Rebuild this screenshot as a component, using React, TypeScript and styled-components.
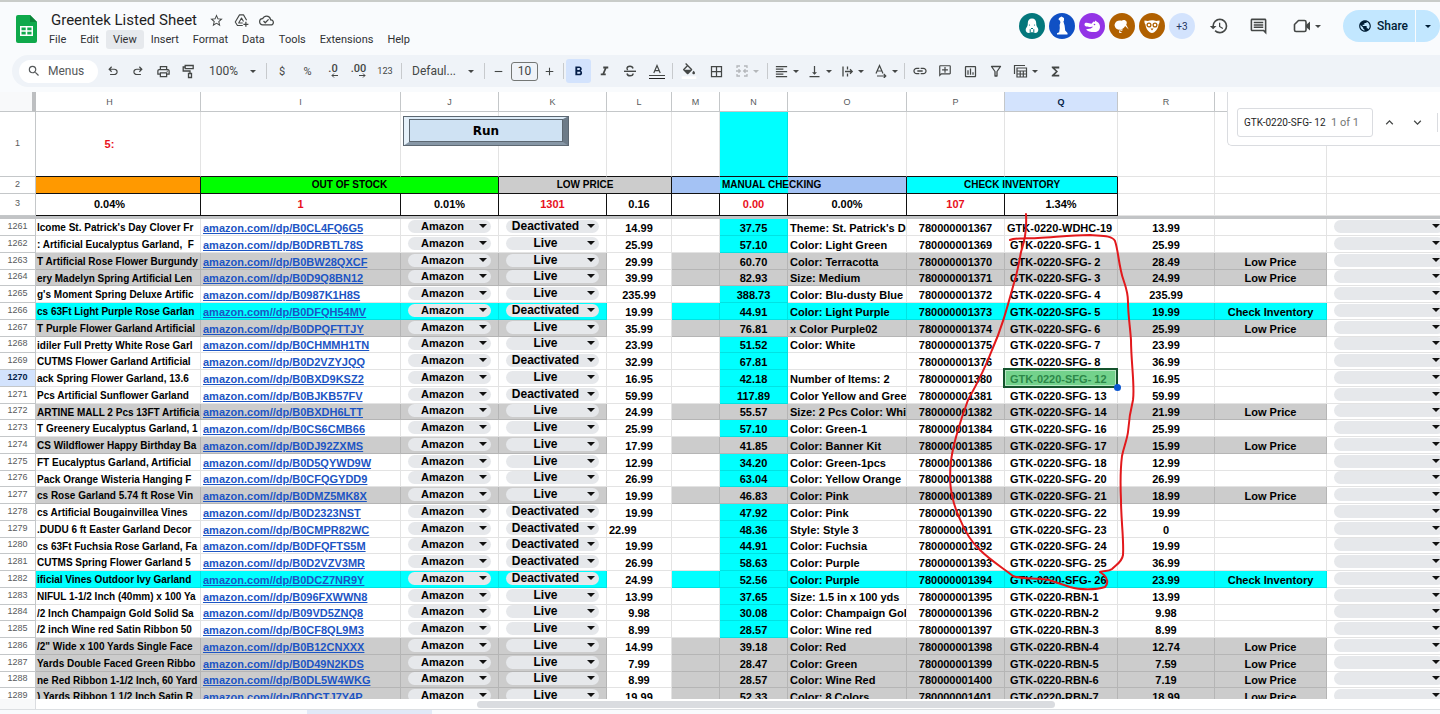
import React from "react";
import styled, { createGlobalStyle, css } from "styled-components";
import {
  MdStarBorder,
  MdOutlineCloudDone,
  MdSearch,
  MdOutlinePrint,
  MdFormatBold,
  MdFormatItalic,
  MdBorderAll,
  MdFormatAlignLeft,
  MdVerticalAlignBottom,
  MdLink,
  MdOutlineAddComment,
  MdOutlinePoll,
  MdFunctions,
  MdHistory,
  MdOutlineInsertComment,
  MdPublic,
  MdExpandLess,
  MdExpandMore,
  MdRemove,
  MdAdd,
} from "react-icons/md";

const GlobalStyle = createGlobalStyle`
  *, *::before, *::after { box-sizing: border-box; }
  body { margin: 0; font-family: Roboto, "Liberation Sans", sans-serif; color: #1f1f1f; background: #f9fbfd; }
  button, input, select { font: inherit; color: inherit; margin: 0; }
`;

const Page = styled.div`
  display: flex;
  flex-direction: column;
  height: 100vh;
  overflow: hidden;
  border-top: 2px solid #c9ccc9;
`;

/* ---------- title bar ---------- */

const TitleBar = styled.header`
  display: flex;
  align-items: flex-start;
  flex: none;
  height: 53px;
  padding-left: 16px;
`;

const Logo = styled.svg`
  flex: none;
  width: 21px;
  height: 28px;
  margin-top: 13px;
`;

const TitleBlock = styled.div`
  flex: 1;
  padding: 8px 0 0 5px;
`;

const TitleRow = styled.div`
  display: flex;
  align-items: center;
  gap: 10px;
  height: 20px;
  padding-left: 9px;
`;

const Title = styled.h1`
  margin: 0 2px 0 0;
  font-size: 15px;
  line-height: 20px;
  font-weight: 400;
`;

const BareButton = styled.button`
  display: inline-flex;
  align-items: center;
  justify-content: center;
  padding: 0;
  border: 0;
  background: none;
  color: #444746;
`;

const MenuRow = styled.nav`
  display: flex;
`;

const MenuItem = styled.button<{ $active?: boolean }>`
  height: 19px;
  padding: 0 7px;
  border: 0;
  border-radius: 3px;
  background: ${(p) => (p.$active ? "#e6e9ed" : "transparent")};
  color: #303134;
  font-size: 11px;
  line-height: 19px;
`;

const People = styled.div`
  display: flex;
  gap: 4px;
  margin: 11px 14px 0 0;
`;

const Avatar = styled.svg`
  width: 26px;
  height: 26px;
`;

const MorePeople = styled.button`
  width: 26px;
  height: 26px;
  padding: 0;
  border: 0;
  border-radius: 50%;
  background: #d3e3fd;
  color: #1f3760;
  font-size: 10px;
`;

const HeaderActions = styled.div`
  display: flex;
  align-items: center;
  gap: 20px;
  height: 26px;
  margin: 11px 18px 0 0;
`;

const Share = styled.div`
  display: flex;
  gap: 1px;
  height: 32px;
  margin-top: 8px;
`;

const ShareButton = styled.button<{ $side: "left" | "right" }>`
  display: flex;
  align-items: center;
  justify-content: center;
  gap: 5px;
  width: ${(p) => (p.$side === "left" ? 72 : 24)}px;
  padding: 0 0 0 ${(p) => (p.$side === "left" ? 8 : 0)}px;
  border: 0;
  border-radius: ${(p) => (p.$side === "left" ? "16px 0 0 16px" : "0 16px 16px 0")};
  background: #c2e7ff;
  color: #001d35;
  font-size: 12px;
  font-weight: 500;
`;

/* ---------- toolbar ---------- */

const ToolbarRow = styled.div`
  display: flex;
  align-items: center;
  flex: none;
  height: 32px;
  margin: 0 0 5px 12px;
  padding-left: 7px;
  border-radius: 16px 0 0 16px;
  background: #eff3f8;
  color: #444746;
`;

const MenuSearch = styled.button`
  display: flex;
  align-items: center;
  gap: 7px;
  width: 79px;
  height: 23px;
  margin-right: 2px;
  padding: 0 0 0 8px;
  border: 0;
  border-radius: 12px;
  background: #fff;
  color: #55585a;
  font-size: 12px;
`;

const Tool = styled.button<{ $w: number; $on?: boolean; $dim?: boolean }>`
  display: inline-flex;
  align-items: center;
  justify-content: center;
  flex: none;
  gap: 4px;
  width: ${(p) => p.$w}px;
  height: 24px;
  padding: 0;
  border: 0;
  border-radius: 3px;
  background: ${(p) => (p.$on ? "#d3e3fd" : "transparent")};
  color: ${(p) => (p.$dim ? "#b4b7ba" : p.$on ? "#041e49" : "#444746")};
  font-size: 11px;
`;

const WideTool = styled(Tool)`
  justify-content: space-between;
  padding: 0 8px;
  font-size: 12px;
`;

const Divider = styled.span`
  flex: none;
  width: 1px;
  height: 16px;
  margin: 0 2px;
  background: #c7cacd;
`;

const SizeInput = styled.input`
  width: 27px;
  height: 19px;
  margin-left: 1px;
  padding: 0;
  border: 1px solid #747775;
  border-radius: 3px;
  background: transparent;
  color: #444746;
  font-size: 12px;
  text-align: center;
`;

/* ---------- sheet ---------- */

const Sheet = styled.main`
  position: relative;
  flex: 1;
  min-height: 0;
  overflow: hidden;
  background: #fff;
  font-family: "Liberation Sans", Arial, sans-serif;
`;

const Grid = styled.table`
  width: calc(100% + 12px);
  table-layout: fixed;
  border-collapse: separate;
  border-spacing: 0;
  color: #000;
  font-size: 11px;
  line-height: 14px;
  font-weight: 700;
`;

/* Column H is scrolled partly under the row numbers, so its centre sits further left. */
const hiddenPart = css`
  padding-right: 17px;
`;

const LetterCell = styled.th<{ $active?: boolean; $corner?: boolean; $cut?: boolean }>`
  height: 20px;
  padding: 0;
  border-right: 1px solid #c4c7c9;
  border-bottom: 1px solid #c4c7c9;
  background: ${(p) => (p.$active ? "#d3e3fd" : "#fff")};
  color: ${(p) => (p.$active ? "#041e49" : "#575a5c")};
  font-size: 9px;
  font-weight: ${(p) => (p.$active ? 700 : 400)};
  ${(p) => p.$cut && hiddenPart}
  ${(p) =>
    p.$corner &&
    css`
      border-right: 4px solid #bdbfc1;
      background: #f8f9fa;
    `}
`;

const NumberCell = styled.th<{ $active?: boolean }>`
  padding: 0 0 3px;
  border-right: 1px solid #c4c7c9;
  border-bottom: 1px solid #c4c7c9;
  background: ${(p) => (p.$active ? "#d3e3fd" : "#fff")};
  color: ${(p) => (p.$active ? "#041e49" : "#575a5c")};
  font-size: 9px;
  line-height: 10px;
  font-weight: ${(p) => (p.$active ? 700 : 400)};
`;

const Cell = styled.td<{ $bg?: string; $left?: boolean; $red?: boolean; $pad?: number }>`
  padding: 2px 0 0 ${(p) => p.$pad ?? 0}px;
  border-right: 1px solid rgba(0, 0, 0, 0.11);
  border-bottom: 1px solid rgba(0, 0, 0, 0.11);
  background: ${(p) => p.$bg ?? "#fff"};
  color: ${(p) => (p.$red ? "#e8111c" : "inherit")};
  text-align: ${(p) => (p.$left ? "left" : "center")};
  white-space: nowrap;
  overflow: hidden;
`;

const NameCell = styled(Cell)`
  font-size: 10px;
`;

const TallCell = styled(Cell)<{ $rule?: boolean; $cut?: boolean }>`
  position: relative;
  height: 65px;
  padding-top: 0;
  overflow: visible;
  ${(p) => p.$rule && "border-bottom-color: #111;"}
  ${(p) => p.$cut && hiddenPart}
`;

const BandCell = styled(Cell)`
  height: 17px;
  padding-top: 0;
  border-color: #111;
  font-size: 10px;
`;

const TotalCell = styled(Cell)<{ $rule?: boolean; $cut?: boolean }>`
  height: 22px;
  padding-top: 0;
  padding-bottom: 1px;
  ${(p) => p.$rule && "border-color: #111;"}
  ${(p) => p.$cut && hiddenPart}
`;

const FreezeBar = styled.td`
  height: 3px;
  padding: 0;
  background: #c2c4c6;
`;

/* Three rows of 17px and one of 16px repeat, the rhythm of a scaled 21px row. */
const DataRow = styled.tr`
  & > * {
    height: 17px;
  }
  &:nth-child(4n) > * {
    height: 16px;
    line-height: 13px;
  }
  &:nth-child(4n) > th {
    line-height: 10px;
  }
`;

const ProductLink = styled.a`
  color: #1c55c4;
  text-decoration: underline;
  text-underline-offset: 1px;
`;

const ChipCell = styled(Cell)`
  padding: 0 7px 2px;
`;

const ChipBox = styled.span`
  position: relative;
  display: block;
  height: 13px;
`;

const ChipSelect = styled.select<{ $size: number }>`
  display: block;
  appearance: none;
  width: 100%;
  height: 13px;
  padding: 0 14px 0 0;
  border: 0;
  border-radius: 7px;
  background: #e6e8eb;
  font-size: ${(p) => p.$size}px;
  line-height: 13px;
  font-weight: 700;
  text-align: center;
  text-align-last: center;
`;

const ChipArrow = styled.svg`
  position: absolute;
  top: 4px;
  right: 4px;
  width: 8px;
  height: 4px;
  pointer-events: none;
`;

const SelectedCell = styled(Cell)`
  position: relative;
  overflow: visible;
  background: #73d28c;
  color: #2c8748;
  &::before {
    content: "";
    position: absolute;
    inset: -2px -1px -2px -2px;
    border: 2px solid #14532d;
    box-shadow: inset 0 0 0 1px #b5e8c2;
  }
  &::after {
    content: "";
    position: absolute;
    right: -4px;
    bottom: -5px;
    width: 7px;
    height: 7px;
    border-radius: 50%;
    background: #0b57d0;
  }
`;

const RunButton = styled.button`
  position: absolute;
  top: 4px;
  left: 2px;
  z-index: 1;
  width: 166px;
  height: 30px;
  padding: 0;
  border: solid;
  border-width: 3px 6px 4px;
  border-color: #dcebf7 #6d7b88 #8797a6 #e6f1fa;
  outline: 1px solid #5d6872;
  outline-offset: -1px;
  background: #cfe2f3;
  box-shadow: inset 0 0 0 1px #5d6872;
  color: #000;
  font-family: "DejaVu Sans", sans-serif;
  font-size: 12px;
  font-weight: 700;
`;

const Annotation = styled.svg`
  position: absolute;
  top: 0;
  left: 0;
  width: 1440px;
  height: 607px;
  pointer-events: none;
`;

const FindPanel = styled.form`
  position: absolute;
  top: 0;
  right: 0;
  display: flex;
  align-items: center;
  width: 213px;
  height: 54px;
  padding: 8px 2px 0 9px;
  border: solid #dadce0;
  border-width: 0 0 1px 1px;
  border-radius: 0 0 0 5px;
  background: #fff;
  font-family: Roboto, sans-serif;
`;

const FindField = styled.label`
  display: flex;
  align-items: center;
  width: 136px;
  height: 29px;
  padding: 0 6px;
  border: 1px solid #dadce0;
  border-radius: 3px;
  color: #747775;
  font-size: 11px;
  white-space: nowrap;
`;

const FindInput = styled.input`
  width: 87px;
  padding: 0;
  border: 0;
  outline: 0;
  color: #1f1f1f;
  font-size: 10px;
`;

const FindButton = styled(BareButton)`
  width: 27px;
  margin-left: 1px;
  &:first-of-type {
    margin-left: 3px;
  }
`;

const FindDivider = styled.span`
  width: 1px;
  height: 19px;
  margin-left: auto;
  background: #dadce0;
`;

/* ---------- bottom ---------- */

const ScrollRow = styled.div`
  display: flex;
  align-items: center;
  flex: none;
  height: 11px;
  border-bottom: 1px solid #dcdfe2;
  background: #fff;
`;

const ScrollCorner = styled.span`
  width: 36px;
  height: 10px;
  border-right: 1px solid #dadce0;
  background: #f8f9fa;
`;

const ScrollTrack = styled.span`
  flex: 1;
  padding-left: 441px;
`;

const ScrollThumb = styled.span`
  display: block;
  width: 60%;
  height: 7px;
  border-radius: 4px;
  background: #dadce0;
`;

const TabStrip = styled.footer`
  flex: none;
  height: 4px;
  padding-left: 307px;
  background: #f9fbfd;
`;

const ActiveTab = styled.span`
  display: block;
  width: 125px;
  height: 4px;
  background: #e1e9f7;
`;

/* ---------- icons ---------- */

const Arrow = ({ size = 8 }: { size?: number }) => (
  <svg width={size} height={size / 2} viewBox="0 0 8 4" aria-hidden="true">
    <path d="M0 0h8L4 4z" fill="currentColor" />
  </svg>
);

const UndoIcon = ({ flip }: { flip?: boolean }) => (
  <svg width="14" height="14" viewBox="0 -960 960 960" aria-hidden="true">
    <path
      transform={flip ? "translate(960 0) scale(-1 1)" : undefined}
      fill="currentColor"
      d="M280-200v-80h284q63 0 109.500-40T720-420q0-60-46.500-100T564-560H312l104 104-56 56-200-200 200-200 56 56-104 104h252q97 0 169.500 63T800-420q0 94-72.500 157T564-200H280Z"
    />
  </svg>
);

const DriveIcon = () => (
  <svg width="15" height="15" viewBox="0 0 24 24" fill="none" stroke="currentColor" strokeWidth="1.800" strokeLinejoin="round" aria-hidden="true">
    <path d="M14 20H5.500L2 14.500 8.800 3h6.400l5 8.500" />
    <path d="M14 16H7.500L12 8l3.200 5.500" />
    <path d="M19 14v8M15 18h8" strokeWidth="2" />
  </svg>
);

const PaintIcon = () => (
  <svg width="14" height="15" viewBox="0 0 14 15" fill="none" stroke="currentColor" strokeWidth="1.300" aria-hidden="true">
    <path d="M3.200 1.500h8v3.200h-8zM3.200 3H1.200v4H8v2.500M6.500 9.500h3v4h-3z" />
  </svg>
);

const FillIcon = () => (
  <svg width="16" height="16" viewBox="0 0 24 24" aria-hidden="true">
    <path
      fill="currentColor"
      d="M16.560 8.940 7.620 0 6.210 1.410l2.380 2.380-5.150 5.150a1.490 1.490 0 0 0 0 2.120l5.500 5.500c.29.29.68.44 1.060.44s.77-.15 1.060-.44l5.500-5.500c.59-.58.59-1.530 0-2.120zM5.210 10 10 5.210 14.790 10zM19 11.500s-2 2.170-2 3.500c0 1.100.9 2 2 2s2-.9 2-2c0-1.330-2-3.500-2-3.500z"
    />
    <path d="M1 20h22v4H1z" fill="#fff" />
  </svg>
);

const StrikeIcon = () => (
  <svg width="14" height="14" viewBox="0 0 14 14" fill="none" stroke="currentColor" strokeWidth="1.400" aria-hidden="true">
    <path d="M1 7.300h12" />
    <path d="M10 4.500C9.700 3 8.600 2.300 7 2.300 5.300 2.300 4 3.100 4 4.500c0 .6.300 1.100.8 1.500M4 9.500c.3 1.500 1.400 2.300 3 2.300 1.800 0 3.100-.8 3.100-2.200" />
  </svg>
);

const FilterIcon = () => (
  <svg width="14" height="14" viewBox="0 0 14 14" fill="none" stroke="currentColor" strokeWidth="1.300" strokeLinejoin="round" aria-hidden="true">
    <path d="M2.500 2.500h9L8 7.500v4.500H6V7.500z" />
  </svg>
);

const Decimals = styled.span`
  display: flex;
  flex-direction: column;
  align-items: flex-end;
  font-size: 11px;
  font-weight: 500;
  line-height: 9px;
`;

const DecimalIcon = ({ digits, right }: { digits: string; right?: boolean }) => (
  <Decimals>
    {digits}
    <svg width="7" height="5" viewBox="0 0 7 5" fill="none" stroke="currentColor" aria-hidden="true">
      <path d={right ? "M0 2.500h6M4 .5l2 2-2 2" : "M7 2.500H1M3 .5l-2 2 2 2"} />
    </svg>
  </Decimals>
);

const TextColorIcon = () => (
  <svg width="18" height="18" viewBox="0 0 18 18" fill="none" stroke="currentColor" aria-hidden="true">
    <path d="M5.800 11 9 3.500 12.200 11M6.900 8.700h4.200" strokeWidth="1.200" />
    <path d="M1 13.500h16" strokeWidth="1" />
    <path d="M1 16.500h16" stroke="#222" strokeWidth="1" />
  </svg>
);

const MergeIcon = () => (
  <svg width="14" height="14" viewBox="0 0 14 14" fill="none" stroke="currentColor" strokeWidth="1.300" aria-hidden="true">
    <path d="M5 2H2v2M9 2h3v2M5 12H2v-2M9 12h3v-2M1 7h4M3.500 5.200 5.300 7 3.500 8.800M13 7H9M10.500 5.200 8.700 7l1.800 1.800" />
  </svg>
);

const WrapIcon = () => (
  <svg width="13" height="13" viewBox="0 0 13 13" fill="none" stroke="currentColor" strokeWidth="1.300" aria-hidden="true">
    <path d="M2 1.500v10M6.500 1.500v3M6.500 8.500v3M4 6.500h7M9 4.300l2.200 2.200L9 8.700" />
  </svg>
);

const RotateIcon = () => (
  <svg width="14" height="14" viewBox="0 0 14 14" fill="none" stroke="currentColor" strokeWidth="1.200" aria-hidden="true">
    <path d="M2 9.500 5.500 1.500 9 9.500M3.200 7h4.600M3 12h8.500M9.800 10l2 2-2 2" />
  </svg>
);

const TableViewIcon = () => (
  <svg width="15" height="14" viewBox="0 0 15 14" fill="none" stroke="currentColor" strokeWidth="1.200" aria-hidden="true">
    <path d="M1.500 10V1.500H12" />
    <path d="M4 4h9.500v9H4zM4 7h9.500M4 10h9.500M7.200 7v6M10.300 7v6" />
  </svg>
);

const VideoIcon = () => (
  <svg width="18" height="18" viewBox="0 0 18 18" aria-hidden="true">
    <path d="M5.500 3.500H11.500Q13 3.500 13 5V13Q13 14.500 11.500 14.500H3Q1.500 14.500 1.500 13V7.500z" fill="none" stroke="#444746" strokeWidth="1.600" strokeLinejoin="round" />
    <path d="M13 8 17 4.500v9L13 10z" fill="#444746" />
  </svg>
);

const SheetsLogo = () => (
  <Logo viewBox="0 0 21 28" role="img" aria-label="Sheets">
    <path d="M2 0h12l7 7v19a2 2 0 0 1-2 2H2a2 2 0 0 1-2-2V2a2 2 0 0 1 2-2z" fill="#0fa94b" />
    <path d="M14 0l7 7h-7z" fill="#0b8438" />
    <path d="M4 11h13v10H4z" fill="#fff" />
    <path d="M5.500 12.500h4.200v2.700H5.500zM11.300 12.500h4.200v2.700h-4.200zM5.500 16.800h4.200v2.700H5.500zM11.300 16.800h4.200v2.700h-4.200z" fill="#0fa94b" />
  </Logo>
);

const animals = [
  {
    name: "Walrus",
    color: "#04777c",
    art: (
      <>
        <path d="M13 5.500c-2.600 0-4.200 2-4.200 4.500 0 2-.3 3.300-1.300 4.600-1.200 1.300-1 3.600.2 4.600 1.200 1 2.600.8 3.600 0h3.400c1 .8 2.400 1 3.600 0 1.200-1 1.400-3.300.2-4.600-1-1.300-1.300-2.600-1.300-4.600 0-2.500-1.600-4.500-4.200-4.500z" fill="#fff" />
        <path d="M11.200 16.200v3M14.800 16.200v3M12 15.500h2" stroke="#04777c" fill="none" />
        <circle cx="10.500" cy="12" r=".6" fill="#04777c" />
        <circle cx="15.500" cy="12" r=".6" fill="#04777c" />
      </>
    ),
  },
  {
    name: "Meerkat",
    color: "#1050c4",
    art: <path d="M10 5l2.500-1.500L15 5v2.500l-.6 1 1.200 4 .6 5 2.300 2.500v1.500H8v-1.200l2.200-1 .6-4.300-.2-3 .8-2.500-.4-1.800L9.500 6.500z" fill="#fff" />,
  },
  {
    name: "Hippo",
    color: "#9334e6",
    art: (
      <>
        <path d="M5.500 11.500c0-1.400 1-2 2.300-1.700l4.700 1 2-2.300 1 .5 1-1.500 1.300 1.200c2 .8 3.200 2.700 3.200 5.300-.1 3-2.300 5-5.500 5-3.500 0-7.800-.6-8.200-2.800l4.500-.6 2.400-1.800c-3 .2-8.700.4-8.700-2.300z" fill="#fff" />
        <circle cx="15.500" cy="11.500" r=".8" fill="#9334e6" />
      </>
    ),
  },
  {
    name: "Kiwi",
    color: "#b06000",
    art: (
      <>
        <path d="M5.500 12c.6-3.600 3.800-5 7-4.300 1.500-1.300 4.200-1 5 .8.500 1.200.3 2.300-.3 3.200l2.500 4.800-3.600-3.500c-.8 2-2.500 3.200-4.600 3.200-2 1.200-5.600 0-6-4.200z" fill="#fff" />
        <path d="M11.500 15.500l-1 4h2M13 15.500l-.3 2.500" stroke="#fff" fill="none" />
      </>
    ),
  },
  {
    name: "Lemur",
    color: "#b06000",
    art: (
      <>
        <path d="M5.500 7.500l3.300.6C11 6.800 15 6.800 17.200 8.100l3.300-.6c.3 1.500-.2 3-1 4-.2 4-3.500 8.500-6.500 8.500s-6.300-4.500-6.500-8.500c-.8-1-1.300-2.500-1-4z" fill="#fff" />
        <g fill="none" stroke="#b06000" strokeWidth="1.300">
          <circle cx="10" cy="12" r="1.900" />
          <circle cx="16" cy="12" r="1.900" />
        </g>
        <path d="M11.500 15.500h3L13 17.500z" fill="#b06000" />
      </>
    ),
  },
];

/* ---------- data ---------- */

type Kind = "plain" | "low" | "check";
type Row = [number, Kind, string, string, string, string, string, string, string, string, string];

const D = "Deactivated";
const L = "Live";

const rows: Row[] = [
  [1261, "plain", "lcome St. Patrick's Day Clover Fr", "B0CL4FQ6G5", D, "14.99", "37.75", "Theme: St. Patrick's Da", "780000001367", "GTK-0220-WDHC-19", "13.99"],
  [1262, "plain", ": Artificial Eucalyptus Garland,\u00a0 F", "B0DRBTL78S", L, "25.99", "57.10", "Color: Light Green", "780000001369", "GTK-0220-SFG- 1", "25.99"],
  [1263, "low", "T Artificial Rose Flower Burgundy", "B0BW28QXCF", L, "29.99", "60.70", "Color: Terracotta", "780000001370", "GTK-0220-SFG- 2", "28.49"],
  [1264, "low", "ery Madelyn Spring Artificial Len", "B0D9Q8BN12", L, "39.99", "82.93", "Size: Medium", "780000001371", "GTK-0220-SFG- 3", "24.99"],
  [1265, "plain", "g's Moment Spring Deluxe Artific", "B0987K1H8S", L, "235.99", "388.73", "Color: Blu-dusty Blue &", "780000001372", "GTK-0220-SFG- 4", "235.99"],
  [1266, "check", "cs 63Ft Light Purple Rose Garlan", "B0DFQH54MV", D, "19.99", "44.91", "Color: Light Purple", "780000001373", "GTK-0220-SFG- 5", "19.99"],
  [1267, "low", "T Purple Flower Garland Artificial", "B0DPQFTTJY", L, "35.99", "76.81", "x Color Purple02", "780000001374", "GTK-0220-SFG- 6", "25.99"],
  [1268, "plain", "idiler Full Pretty White Rose Garl", "B0CHMMH1TN", L, "23.99", "51.52", "Color: White", "780000001375", "GTK-0220-SFG- 7", "23.99"],
  [1269, "plain", "CUTMS Flower Garland Artificial", "B0D2VZYJQQ", D, "32.99", "67.81", "", "780000001376", "GTK-0220-SFG- 8", "36.99"],
  [1270, "plain", "ack Spring Flower Garland, 13.6", "B0BXD9KSZ2", L, "16.95", "42.18", "Number of Items: 2", "780000001380", "GTK-0220-SFG- 12", "16.95"],
  [1271, "plain", "Pcs Artificial Sunflower Garland", "B0BJKB57FV", D, "59.99", "117.89", "Color Yellow and Green", "780000001381", "GTK-0220-SFG- 13", "59.99"],
  [1272, "low", "ARTINE MALL 2 Pcs 13FT Artificia", "B0BXDH6LTT", L, "24.99", "55.57", "Size: 2 Pcs Color: Whit", "780000001382", "GTK-0220-SFG- 14", "21.99"],
  [1273, "plain", "T Greenery Eucalyptus Garland, 1", "B0CS6CMB66", L, "25.99", "57.10", "Color: Green-1", "780000001384", "GTK-0220-SFG- 16", "25.99"],
  [1274, "low", "CS Wildflower Happy Birthday Ba", "B0DJ92ZXMS", L, "17.99", "41.85", "Color: Banner Kit", "780000001385", "GTK-0220-SFG- 17", "15.99"],
  [1275, "plain", "FT Eucalyptus Garland, Artificial", "B0D5QYWD9W", L, "12.99", "34.20", "Color: Green-1pcs", "780000001386", "GTK-0220-SFG- 18", "12.99"],
  [1276, "plain", "Pack Orange Wisteria Hanging F", "B0CFQGYDD9", L, "26.99", "63.04", "Color: Yellow Orange", "780000001388", "GTK-0220-SFG- 20", "26.99"],
  [1277, "low", "cs Rose Garland 5.74 ft Rose Vin", "B0DMZ5MK8X", L, "19.99", "46.83", "Color: Pink", "780000001389", "GTK-0220-SFG- 21", "18.99"],
  [1278, "plain", "cs Artificial Bougainvillea Vines", "B0D2323NST", D, "19.99", "47.92", "Color: Pink", "780000001390", "GTK-0220-SFG- 22", "19.99"],
  [1279, "plain", ".DUDU 6 ft Easter Garland Decor", "B0CMPR82WC", D, "22.99", "48.36", "Style: Style 3", "780000001391", "GTK-0220-SFG- 23", "0"],
  [1280, "plain", "cs 63Ft Fuchsia Rose Garland, Fa", "B0DFQFTS5M", D, "19.99", "44.91", "Color: Fuchsia", "780000001392", "GTK-0220-SFG- 24", "19.99"],
  [1281, "plain", "CUTMS Spring Flower Garland 5", "B0D2VZV3MR", D, "26.99", "58.63", "Color: Purple", "780000001393", "GTK-0220-SFG- 25", "36.99"],
  [1282, "check", "ificial Vines Outdoor Ivy Garland", "B0DCZ7NR9Y", D, "24.99", "52.56", "Color: Purple", "780000001394", "GTK-0220-SFG- 26", "23.99"],
  [1283, "plain", "NIFUL 1-1/2 Inch (40mm) x 100 Ya", "B096FXWWN8", L, "13.99", "37.65", "Size: 1.5 in x 100 yds", "780000001395", "GTK-0220-RBN-1", "13.99"],
  [1284, "plain", "/2 Inch Champaign Gold Solid Sa", "B09VD5ZNQ8", L, "9.98", "30.08", "Color: Champaign Gold", "780000001396", "GTK-0220-RBN-2", "9.98"],
  [1285, "plain", "/2 inch Wine red Satin Ribbon 50", "B0CF8QL9M3", L, "8.99", "28.57", "Color: Wine red", "780000001397", "GTK-0220-RBN-3", "8.99"],
  [1286, "low", "/2\" Wide x 100 Yards Single Face", "B0B12CNXXX", L, "14.99", "39.18", "Color: Red", "780000001398", "GTK-0220-RBN-4", "12.74"],
  [1287, "low", "Yards Double Faced Green Ribbo", "B0D49N2KDS", L, "7.99", "28.47", "Color: Green", "780000001399", "GTK-0220-RBN-5", "7.59"],
  [1288, "low", "ne Red Ribbon 1-1/2 Inch, 60 Yard", "B0DL5W4WKG", L, "8.99", "28.57", "Color: Wine Red", "780000001400", "GTK-0220-RBN-6", "7.19"],
  [1289, "low", ") Yards Ribbon 1 1/2 Inch Satin R", "B0DGTJ7Y4P", L, "19.99", "52.33", "Color: 8 Colors", "780000001401", "GTK-0220-RBN-7", "18.99"],
];

const CYAN = "#00ffff";
const GREY = "#cccccc";
const tint: Record<Kind, string> = { plain: "#ffffff", low: GREY, check: CYAN };
const note: Record<Kind, string> = { plain: "", low: "Low Price", check: "Check Inventory" };
const letters = ["H", "I", "J", "K", "L", "M", "N", "O", "P", "Q", "R", "S", "T"];
const widths = [36, 165, 200, 98, 108, 65, 48, 68, 119, 98, 113, 97, 112];
const menus = ["File", "Edit", "View", "Insert", "Format", "Data", "Tools", "Extensions", "Help"];

const Chip = ({ value, label, size = 11 }: { value: string; label: string; size?: number }) => (
  <ChipBox>
    <ChipSelect $size={size} aria-label={label} defaultValue={value}>
      <option value={value}>{value}</option>
    </ChipSelect>
    <ChipArrow viewBox="0 0 8 4" aria-hidden="true">
      <path d="M0 0h8L4 4z" fill="#111" />
    </ChipArrow>
  </ChipBox>
);

const DataLine = ({ row }: { row: Row }) => {
  const [num, kind, name, asin, status, price, cost, variant, upc, sku, sell] = row;
  const bg = tint[kind];
  const selected = num === 1270;
  const skuPad = sku.includes("WDHC") ? 2 : 5;
  return (
    <DataRow>
      <NumberCell scope="row" $active={selected}>{num}</NumberCell>
      <NameCell $bg={bg} $left $pad={1}>{name}</NameCell>
      <Cell $bg={bg} $left $pad={2}>
        <ProductLink href={`https://amazon.com//dp/${asin}`}>amazon.com//dp/{asin}</ProductLink>
      </Cell>
      <ChipCell $bg={bg}><Chip value="Amazon" label={`Store, row ${num}`} /></ChipCell>
      <ChipCell $bg={bg}><Chip value={status} label={`Status, row ${num}`} size={12} /></ChipCell>
      <Cell $left={num === 1279} $pad={num === 1279 ? 2 : 0}>{price}</Cell>
      <Cell $bg={bg} />
      <Cell $bg={kind === "plain" ? CYAN : bg}>{cost}</Cell>
      <Cell $bg={bg} $left $pad={2}>{variant}</Cell>
      <Cell $bg={bg}>{upc}</Cell>
      {selected ? (
        <SelectedCell $left $pad={skuPad}>{sku}</SelectedCell>
      ) : (
        <Cell $bg={bg} $left $pad={skuPad}>{sku}</Cell>
      )}
      <Cell $bg={bg}>{sell}</Cell>
      <Cell $bg={bg}>{note[kind]}</Cell>
      <ChipCell><Chip value="" label={`Action, row ${num}`} /></ChipCell>
    </DataRow>
  );
};

export default function App() {
  return (
    <>
      <GlobalStyle />
      <Page>
        <TitleBar>
          <SheetsLogo />
          <TitleBlock>
            <TitleRow>
              <Title>Greentek Listed Sheet</Title>
              <BareButton aria-label="Star"><MdStarBorder size={15} /></BareButton>
              <BareButton aria-label="Add to Drive"><DriveIcon /></BareButton>
              <BareButton aria-label="Saved to Drive"><MdOutlineCloudDone size={15} /></BareButton>
            </TitleRow>
            <MenuRow>
              {menus.map((m) => (
                <MenuItem key={m} $active={m === "View"}>{m}</MenuItem>
              ))}
            </MenuRow>
          </TitleBlock>
          <People>
            {animals.map((a) => (
              <Avatar key={a.name} viewBox="0 0 26 26" role="img" aria-label={a.name}>
                <circle cx="13" cy="13" r="13" fill={a.color} />
                {a.art}
              </Avatar>
            ))}
            <MorePeople>+3</MorePeople>
          </People>
          <HeaderActions>
            <BareButton aria-label="Version history"><MdHistory size={20} /></BareButton>
            <BareButton aria-label="Comments"><MdOutlineInsertComment size={19} /></BareButton>
            <BareButton aria-label="Video call">
              <Tool as="span" $w={37}><VideoIcon /><Arrow size={6} /></Tool>
            </BareButton>
          </HeaderActions>
          <Share>
            <ShareButton $side="left"><MdPublic size={14} />Share</ShareButton>
            <ShareButton $side="right" aria-label="Share options"><Arrow size={6} /></ShareButton>
          </Share>
        </TitleBar>

        <ToolbarRow role="toolbar" aria-label="Formatting">
          <MenuSearch><MdSearch size={14} />Menus</MenuSearch>
          <Tool $w={25} aria-label="Undo"><UndoIcon /></Tool>
          <Tool $w={26} aria-label="Redo"><UndoIcon flip /></Tool>
          <Tool $w={25} aria-label="Print"><MdOutlinePrint size={15} /></Tool>
          <Tool $w={25} aria-label="Paint format"><PaintIcon /></Tool>
          <WideTool $w={63}>100%<Arrow size={6} /></WideTool>
          <Divider />
          <Tool $w={26}>$</Tool>
          <Tool $w={25}>%</Tool>
          <Tool $w={26} aria-label="Fewer decimals"><DecimalIcon digits=".0" /></Tool>
          <Tool $w={25} aria-label="More decimals"><DecimalIcon digits=".00" right /></Tool>
          <Tool $w={28}><small>123</small></Tool>
          <Divider />
          <WideTool $w={78}>Defaul...<Arrow size={6} /></WideTool>
          <Divider />
          <Tool $w={23} aria-label="Smaller"><MdRemove size={13} /></Tool>
          <SizeInput aria-label="Font size" defaultValue="10" />
          <Tool $w={23} aria-label="Larger"><MdAdd size={13} /></Tool>
          <Divider />
          <Tool $w={25} $on aria-label="Bold"><MdFormatBold size={15} /></Tool>
          <Tool $w={26} aria-label="Italic"><MdFormatItalic size={15} /></Tool>
          <Tool $w={26} aria-label="Strikethrough"><StrikeIcon /></Tool>
          <Tool $w={27} aria-label="Text color"><TextColorIcon /></Tool>
          <Divider />
          <Tool $w={28} aria-label="Fill color"><FillIcon /></Tool>
          <Tool $w={26} aria-label="Borders"><MdBorderAll size={15} /></Tool>
          <Tool $w={36} $dim aria-label="Merge"><MergeIcon /><Arrow size={6} /></Tool>
          <Divider />
          <Tool $w={33} aria-label="Horizontal align"><MdFormatAlignLeft size={15} /><Arrow size={6} /></Tool>
          <Tool $w={33} aria-label="Vertical align"><MdVerticalAlignBottom size={15} /><Arrow size={6} /></Tool>
          <Tool $w={33} aria-label="Wrapping"><WrapIcon /><Arrow size={6} /></Tool>
          <Tool $w={33} aria-label="Rotation"><RotateIcon /><Arrow size={6} /></Tool>
          <Divider />
          <Tool $w={25} aria-label="Link"><MdLink size={16} /></Tool>
          <Tool $w={26} aria-label="Comment">
            <svg width="14" height="14" viewBox="0 0 24 24" aria-hidden="true">
              <g transform="translate(24 0) scale(-1 1)"><MdOutlineAddComment size={24} /></g>
            </svg>
          </Tool>
          <Tool $w={25} aria-label="Chart"><MdOutlinePoll size={15} /></Tool>
          <Tool $w={26} aria-label="Filter"><FilterIcon /></Tool>
          <Tool $w={33} aria-label="Table views"><TableViewIcon /><Arrow size={6} /></Tool>
          <Tool $w={26} aria-label="Functions"><MdFunctions size={15} /></Tool>
        </ToolbarRow>

        <Sheet>
          <Grid>
            <colgroup>
              {widths.map((w, i) => (
                <col key={letters[i]} width={w} />
              ))}
              <col />
            </colgroup>
            <thead>
              <tr>
                <LetterCell $corner aria-label="Select all" />
                {letters.map((l) => (
                  <LetterCell key={l} scope="col" $active={l === "Q"} $cut={l === "H"}>{l}</LetterCell>
                ))}
              </tr>
              <tr>
                <NumberCell scope="row">1</NumberCell>
                <TallCell $rule $red $cut>5:</TallCell>
                <TallCell $rule />
                <TallCell $rule><RunButton>Run</RunButton></TallCell>
                <TallCell $rule />
                <TallCell $rule />
                <TallCell $rule />
                <TallCell $rule $bg={CYAN} />
                <TallCell $rule />
                <TallCell $rule />
                <TallCell $rule />
                <TallCell />
                <TallCell />
                <TallCell />
              </tr>
              <tr>
                <NumberCell scope="row">2</NumberCell>
                <BandCell $bg="#ff9900" />
                <BandCell colSpan={2} $bg="#00ff00">OUT OF STOCK</BandCell>
                <BandCell colSpan={2} $bg={GREY}>LOW PRICE</BandCell>
                <BandCell colSpan={3} $left $pad={50} $bg="linear-gradient(90deg, #a4c2f4 48px, #00ffff 48px 116px, #a4c2f4 116px)">MANUAL CHECKING</BandCell>
                <BandCell colSpan={2} $bg={CYAN}>CHECK INVENTORY</BandCell>
                <Cell />
                <Cell />
                <Cell />
              </tr>
              <tr>
                <NumberCell scope="row">3</NumberCell>
                <TotalCell $rule $cut>0.04%</TotalCell>
                <TotalCell $rule $red>1</TotalCell>
                <TotalCell $rule>0.01%</TotalCell>
                <TotalCell $rule $red>1301</TotalCell>
                <TotalCell $rule>0.16</TotalCell>
                <TotalCell $rule />
                <TotalCell $rule $red>0.00</TotalCell>
                <TotalCell $rule>0.00%</TotalCell>
                <TotalCell $rule $red>107</TotalCell>
                <TotalCell $rule>1.34%</TotalCell>
                <TotalCell />
                <TotalCell />
                <TotalCell />
              </tr>
              <tr>
                <FreezeBar colSpan={14} />
              </tr>
            </thead>
            <tbody>
              {rows.map((r) => (
                <DataLine key={r[0]} row={r} />
              ))}
            </tbody>
          </Grid>

          <Annotation viewBox="0 92 1440 607" fill="none" stroke="#e2191c" strokeWidth="2" strokeLinecap="round" strokeLinejoin="round" aria-hidden="true">
            <path d="M1026 214C1027 232 1024 242 1021 252C1018 268 1017 274 1014 283C1006 312 1001 330 992 350C986 366 978 382 968 400C962 416 959 426 956 437C952 452 950 462 950 480C951 496 954 506 959 517C965 532 971 542 980 550C990 560 1003 568 1013 576C1024 580 1036 577 1049 580C1058 583 1064 585 1070 587C1080 590 1096 590 1105 587C1109 583 1107 578 1104 575L1100 572C1104 570 1108 572 1112 569C1117 564 1122 562 1123 555C1124 540 1121 520 1121 500C1120 478 1121 464 1122 456C1124 446 1127 440 1128 432C1129 418 1131 408 1133 400C1135 386 1131 362 1131 340C1130 326 1128 314 1128 302C1128 288 1123 282 1121 271C1118 258 1118 250 1115 241C1112 235 1100 236 1090 235C1072 235 1056 237 1038 238C1028 239 1016 237 1010 240" />
          </Annotation>

          <FindPanel onSubmit={(e) => e.preventDefault()}>
            <FindField>
              <FindInput aria-label="Find in sheet" defaultValue="GTK-0220-SFG- 12" />
              1 of 1
            </FindField>
            <FindButton type="button" aria-label="Previous"><MdExpandLess size={15} /></FindButton>
            <FindButton type="button" aria-label="Next"><MdExpandMore size={15} /></FindButton>
            <FindDivider />
          </FindPanel>
        </Sheet>

        <ScrollRow>
          <ScrollCorner />
          <ScrollTrack><ScrollThumb /></ScrollTrack>
        </ScrollRow>
        <TabStrip><ActiveTab /></TabStrip>
      </Page>
    </>
  );
}
